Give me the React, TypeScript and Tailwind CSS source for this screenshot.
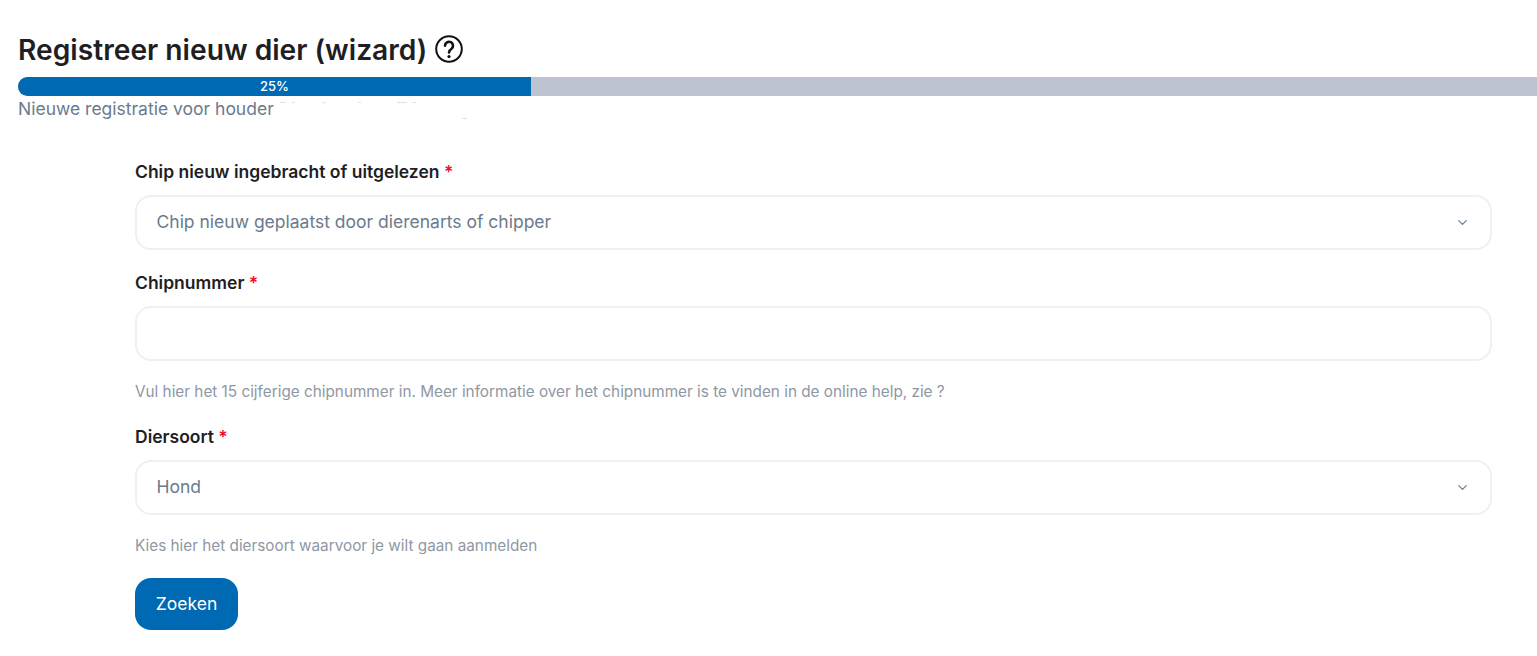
import { ChevronDown } from "lucide-react";

const font = { fontFamily: "Inter, 'Liberation Sans', sans-serif" };

// faint leftovers under the bar, next to the houder name
const specks = [
  "left-[280px] w-[6px]",
  "left-[292px] w-[3px]",
  "left-[322px] w-[3px]",
  "left-[358px] w-[3px]",
  "left-[397px] w-[10px]",
  "left-[412px] w-[4px]",
];

function Label({ text }: { text: string }) {
  return (
    <label className="block h-[24px] text-[17.5px] leading-[24px] font-semibold text-[#1e1e24]">
      {text} <span className="text-[#f00d2d]">*</span>
    </label>
  );
}

function SelectBox({ value }: { value: string }) {
  return (
    <div className="mt-[11px] flex h-[55px] items-center justify-between rounded-[16px] border-2 border-[#eef0f7] pl-[19.5px] pr-[20px] text-[17.5px] text-[#6b7a8c]">
      <span>{value}</span>
      <ChevronDown size={15} strokeWidth={2} className="text-[#6b7f96]" />
    </div>
  );
}

function Hint({ text }: { text: string }) {
  return <p className="mt-[20px] h-[22px] text-[15.3px] leading-[21px] text-[#8e98a3]">{text}</p>;
}

export default function App() {
  return (
    <div style={font} className="h-[656px] w-[1537px] overflow-hidden bg-white">
      <div className="relative pl-[18px] pt-[32px]">
        <div className="flex h-[36px] items-center">
          <h1 className="text-[28.2px] leading-[36px] font-semibold text-[#1e1e24]">
            Registreer nieuw dier (wizard)
          </h1>
          <svg width="28" height="28" viewBox="0 0 28 28" className="ml-[8px] -translate-y-[1px]" fill="none">
            <circle cx="14" cy="14" r="12.8" stroke="#111" strokeWidth="2" />
            <path d="M10 10.6a4 4 0 1 1 6.3 3.4c-1.5 1-2.3 1.8-2.3 3.4" stroke="#111" strokeWidth="2.6" strokeLinecap="round" />
            <circle cx="14" cy="21.6" r="1.6" fill="#111" />
          </svg>
        </div>
        <div className="mt-[9px] flex h-[19px] rounded-l-[10px] bg-[#bdc3d0]">
          <div className="flex w-[513px] items-center justify-center rounded-l-[10px] bg-[#0069b4] text-[13px] font-medium text-white">
            25%
          </div>
        </div>
        <p className="-mt-[1px] h-[24px] text-[17.5px] leading-[28px] text-[#6b7a8c]">Nieuwe registratie voor houder</p>
        {specks.map((s) => (
          <span key={s} className={`absolute top-[102px] h-[1px] bg-[#dfe2e6] ${s}`} />
        ))}
        <span className="absolute left-[462px] top-[118px] h-[1px] w-[5px] bg-[#dfe2e6]" />
      </div>

      <form className="ml-[135px] mt-[41px] w-[1357px]">
        <Label text="Chip nieuw ingebracht of uitgelezen" />
        <SelectBox value="Chip nieuw geplaatst door dierenarts of chipper" />

        <div className="mt-[21px]">
          <Label text="Chipnummer" />
          <div className="mt-[11px] h-[55px] rounded-[16px] border-2 border-[#eef0f7]" />
          <Hint text="Vul hier het 15 cijferige chipnummer in. Meer informatie over het chipnummer is te vinden in de online help, zie ?" />
        </div>

        <div className="mt-[22px]">
          <Label text="Diersoort" />
          <SelectBox value="Hond" />
          <Hint text="Kies hier het diersoort waarvoor je wilt gaan aanmelden" />
        </div>

        <button type="button" className="mt-[21px] h-[52px] w-[103px] rounded-[16px] bg-[#0069b4] text-[17.5px] font-normal text-white">
          Zoeken
        </button>
      </form>
    </div>
  );
}
